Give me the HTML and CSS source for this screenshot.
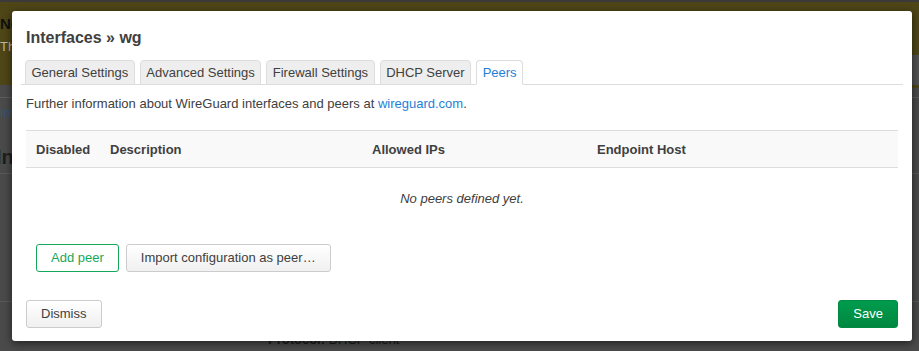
FILE: index.html
```html
<!DOCTYPE html>
<html>
<head>
<meta charset="utf-8">
<link rel="stylesheet" href="styles.css">
</head>
<body>
<div class="page">
  <div class="alert">
    <div class="alert-title">No password set!</div>
    <div class="alert-text">There is no password set on this router.</div>
  </div>
  <div class="tabline"><a class="bg-link">Interfaces</a></div>
  <div class="bg-h2">Interfaces</div>
  <div class="bg-spacer"></div>
  <div class="bg-proto"><b>Protocol:</b> DHCP client</div>
  <div class="right-strip">
    <div class="rs-olive"></div>
    <div class="rs-grey1"></div>
    <div class="rs-line"></div>
  </div>
</div>

<div class="modal">
  <h4 class="modal-title">Interfaces » wg</h4>
  <ul class="tabs">
    <li class="tab">General Settings</li>
    <li class="tab">Advanced Settings</li>
    <li class="tab">Firewall Settings</li>
    <li class="tab">DHCP Server</li>
    <li class="tab active">Peers</li>
  </ul>
  <p class="descr">Further information about WireGuard interfaces and peers at <a class="link">wireguard.com</a>.</p>
  <div class="table">
    <div class="thead">
      <div class="th">Disabled</div>
      <div class="th">Description</div>
      <div class="th">Allowed IPs</div>
      <div class="th">Endpoint Host</div>
    </div>
    <div class="empty">No peers defined yet.</div>
  </div>
  <div class="actions">
    <button class="btn btn-add">Add peer</button>
    <button class="btn">Import configuration as peer…</button>
  </div>
  <div class="footer">
    <button class="btn">Dismiss</button>
    <button class="btn btn-save">Save</button>
  </div>
</div>
</body>
</html>
```

FILE: styles.css
```css
* { box-sizing: border-box; }
html, body { margin: 0; padding: 0; }
body {
  width: 919px;
  height: 351px;
  overflow: hidden;
  font-family: "Liberation Sans", Arial, sans-serif;
  font-size: 13px;
  color: #404040;
  position: relative;
}
.page {
  background: #4a4a4a;
  height: 351px;
  border-top: 2px solid #3a3a3a;
  position: relative;
}
.alert {
  background: #4e4617;
  height: 83px;
  padding: 13px 0 0 0;
  color: #111;
}
.alert-title { font-weight: bold; font-size: 15px; line-height: 18px; }
.alert-text { color: #bdb89c; font-size: 13px; line-height: 22px; margin-top: 3px; }
.tabline {
  border-top: 1px solid #5d5d5d;
  height: 40px;
  padding-top: 7px;
  margin-top: 12px;
}
.bg-link { color: #33547a; font-size: 13px; }
.bg-h2 {
  font-weight: bold;
  font-size: 20px;
  color: #1e1e1e;
  margin-top: 9px;
  height: 28px;
  margin-left: -4px;
  border-bottom: 1px solid #5a5a5a;
}
.bg-spacer { height: 128px; border-bottom: 1px solid #5a5a5a; }
.bg-proto {
  padding-left: 268px;
  margin-top: 30px;
  font-size: 13px;
  color: #1b1b1b;
}
.right-strip {
  position: absolute;
  right: 0;
  top: 0;
  width: 8px;
  height: 100%;
}
.rs-olive { height: 53px; background: #4e4617; }
.rs-grey1 { height: 30px; background: #525252; }
.rs-line { height: 3px; background: #4e4617; }

.modal {
  position: absolute;
  left: 12px;
  top: 11px;
  width: 900px;
  height: 330px;
  background: #fff;
  border-radius: 3px;
  box-shadow: 0 2px 8px rgba(0,0,0,0.6);
  padding: 15px 14px 0 14px;
}
.modal-title {
  margin: 0;
  font-size: 16px;
  font-weight: bold;
  line-height: 24px;
  color: #404040;
}
.tabs {
  list-style: none;
  margin: 10px -5px 0 -5px;
  padding: 0 0 0 4px;
  display: flex;
  gap: 5px;
  border-bottom: 1px solid #ddd;
  height: 25px;
}
.tab {
  height: 25px;
  padding: 0 5.5px;
  line-height: 23px;
  background: #eee;
  border: 1px solid #ddd;
  border-radius: 4px 4px 0 0;
  color: #404040;
  white-space: nowrap;
}
.tab.active {
  background: #fff;
  color: #1e80d8;
  border-bottom-color: #fff;
}
.descr {
  margin: 10px 0 0 0;
  line-height: 18px;
}
.link { color: #1e80d8; }
.table {
  margin-top: 17px;
}
.thead {
  display: grid;
  grid-template-columns: 74px 262px 225px 1fr;
  background: #f9f9f9;
  border-top: 1px solid #ddd;
  border-bottom: 1px solid #ddd;
  height: 38px;
  align-items: center;
}
.th {
  font-weight: bold;
  padding-left: 10px;
}
.empty {
  text-align: center;
  font-style: italic;
  padding-top: 22px;
  height: 76px;
  line-height: 18px;
}
.actions {
  display: flex;
  gap: 7px;
  padding-left: 10px;
}
.btn {
  font-family: inherit;
  font-size: 13px;
  height: 28px;
  padding: 0 14px;
  border: 1px solid #ccc;
  border-radius: 3px;
  background: linear-gradient(#fff, #f0f0f0);
  color: #404040;
  line-height: 26px;
}
.btn-add {
  background: #fff;
  border-color: #16a85a;
  color: #16a85a;
}
.footer {
  display: flex;
  justify-content: space-between;
  margin-top: 28px;
}
.btn-save {
  background: linear-gradient(#009c4e, #008740);
  border-color: #008a44;
  color: #fff;
}
```
